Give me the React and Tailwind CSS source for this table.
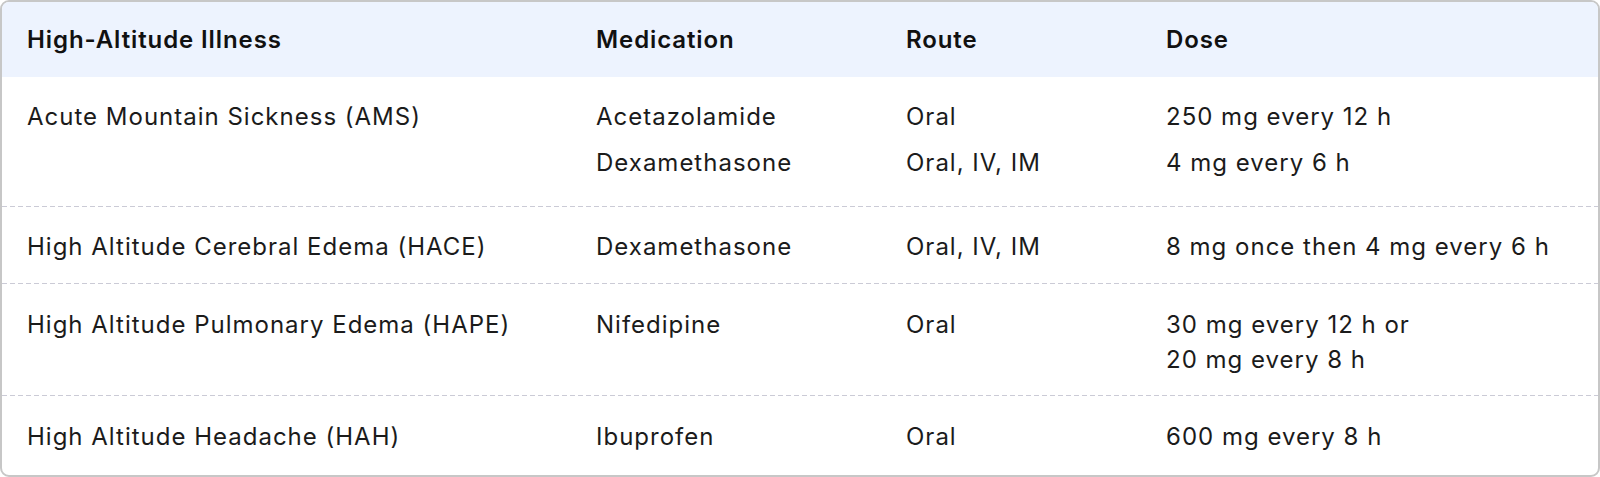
const rows = [
  {
    illness: "Acute Mountain Sickness (AMS)",
    pad: "pt-[22px] pb-[26px]",
    meds: [
      { name: "Acetazolamide", route: "Oral", dose: ["250 mg every 12 h"] },
      { name: "Dexamethasone", route: "Oral, IV, IM", dose: ["4 mg every 6 h"] },
    ],
  },
  {
    illness: "High Altitude Cerebral Edema (HACE)",
    pad: "pt-[22px] pb-[19px]",
    meds: [
      { name: "Dexamethasone", route: "Oral, IV, IM", dose: ["8 mg once then 4 mg every 6 h"] },
    ],
  },
  {
    illness: "High Altitude Pulmonary Edema (HAPE)",
    pad: "pt-[23px] pb-[18px]",
    meds: [
      { name: "Nifedipine", route: "Oral", dose: ["30 mg every 12 h or", "20 mg every 8 h"] },
    ],
  },
  {
    illness: "High Altitude Headache (HAH)",
    pad: "pt-[23px] pb-[18px]",
    meds: [{ name: "Ibuprofen", route: "Oral", dose: ["600 mg every 8 h"] }],
  },
];

const cols = "grid grid-cols-[570px_310px_260px_1fr]";

function Divider() {
  return (
    <div className="h-px w-full bg-[repeating-linear-gradient(to_right,#cbcbd6_0_5px,transparent_5px_8px)]" />
  );
}

function Row({ row }) {
  return (
    <div className={`${cols} ${row.pad}`}>
      <div className="pl-[25px]">{row.illness}</div>
      <div className="col-span-3 flex flex-col gap-[11px]">
        {row.meds.map((m, i) => (
          <div key={i} className="grid grid-cols-[310px_260px_1fr]">
            <div className="pl-[24px]">{m.name}</div>
            <div className="pl-[24px]">{m.route}</div>
            <div className="pl-[24px]">
              {m.dose.map((d, j) => (
                <div key={j}>{d}</div>
              ))}
            </div>
          </div>
        ))}
      </div>
    </div>
  );
}

export default function App() {
  return (
    <div className="w-[1600px] h-[477px] bg-white font-['Inter',sans-serif] text-[#1b1b1b] text-[24px] leading-[35px] tracking-[1px]">
      <div className="h-full border-2 border-[#c7c7c7] rounded-[9px] overflow-hidden flex flex-col">
        <div className={`${cols} h-[75px] items-center bg-[#edf3fe] font-semibold text-[#111111] tracking-[0.9px]`}>
          <div className="pl-[25px]">High-Altitude Illness</div>
          <div className="pl-[24px]">Medication</div>
          <div className="pl-[24px]">Route</div>
          <div className="pl-[24px]">Dose</div>
        </div>
        {rows.map((r, i) => (
          <div key={i}>
            {i > 0 && <Divider />}
            <Row row={r} />
          </div>
        ))}
      </div>
    </div>
  );
}
